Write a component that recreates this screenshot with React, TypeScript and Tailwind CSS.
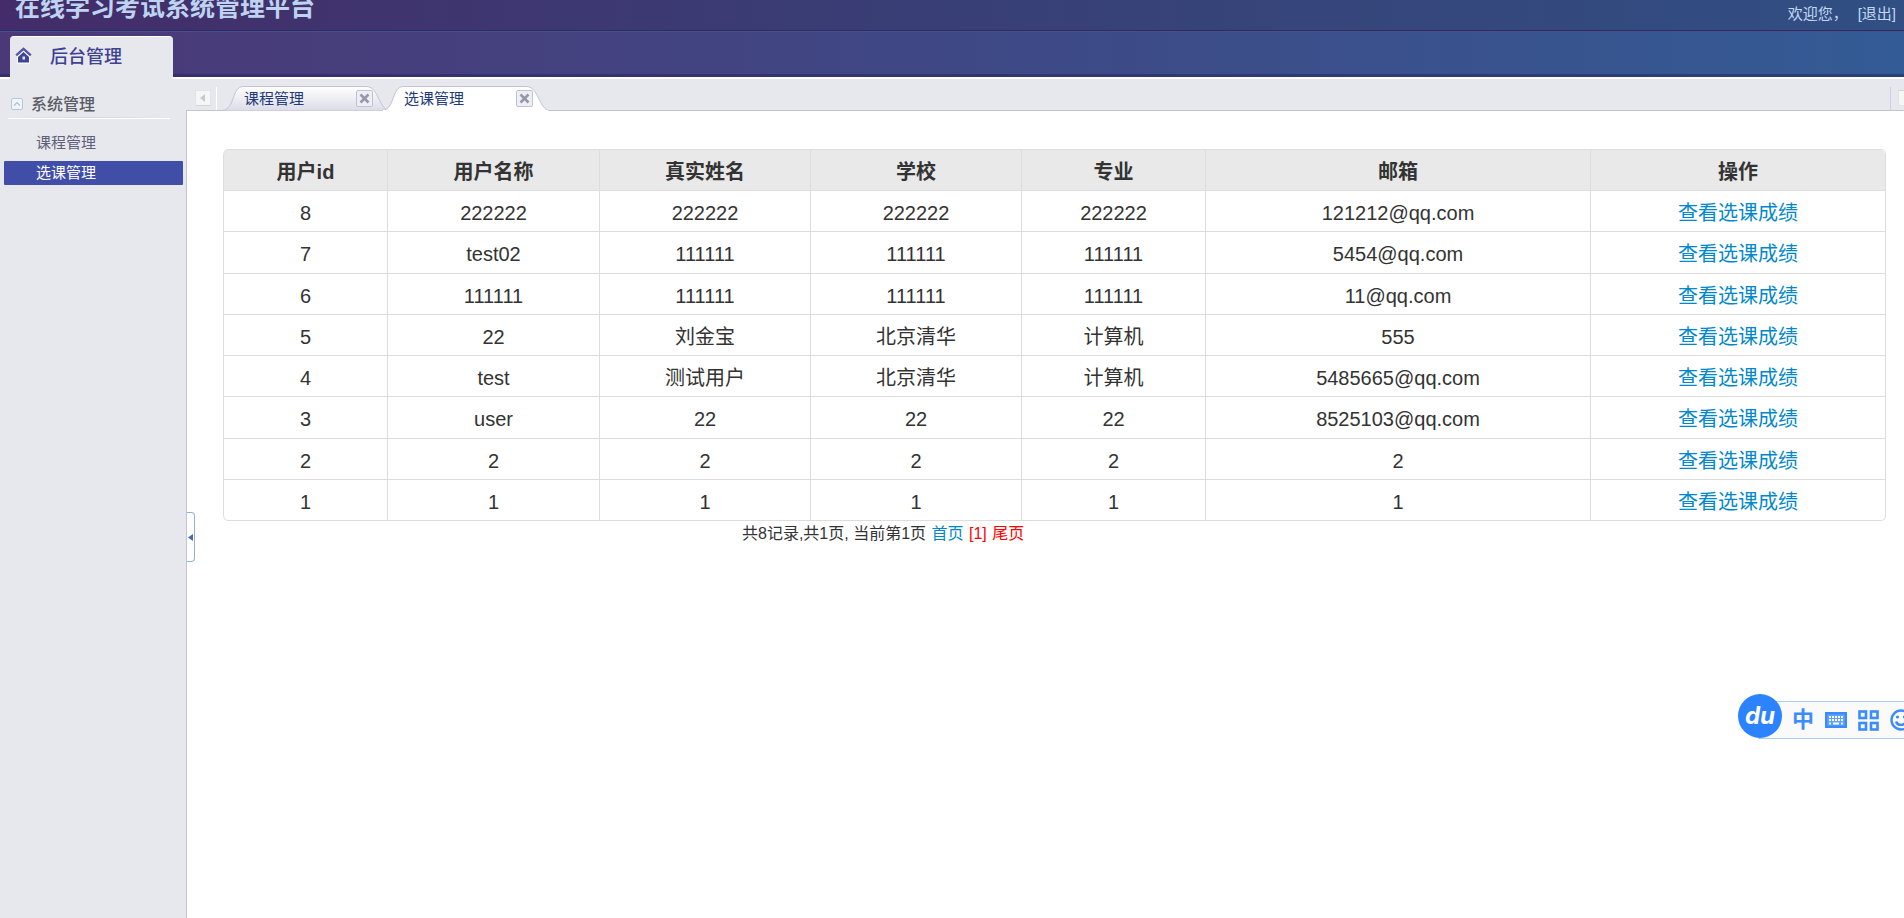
import React, { useState } from 'react';

interface User {
  id: number;
  name: string;
  realName: string;
  school: string;
  major: string;
  email: string;
}

const USERS: User[] = [
  { id: 8, name: '222222', realName: '222222', school: '222222', major: '222222', email: '121212@qq.com' },
  { id: 7, name: 'test02', realName: '111111', school: '111111', major: '111111', email: '5454@qq.com' },
  { id: 6, name: '111111', realName: '111111', school: '111111', major: '111111', email: '11@qq.com' },
  { id: 5, name: '22', realName: '刘金宝', school: '北京清华', major: '计算机', email: '555' },
  { id: 4, name: 'test', realName: '测试用户', school: '北京清华', major: '计算机', email: '5485665@qq.com' },
  { id: 3, name: 'user', realName: '22', school: '22', major: '22', email: '8525103@qq.com' },
  { id: 2, name: '2', realName: '2', school: '2', major: '2', email: '2' },
  { id: 1, name: '1', realName: '1', school: '1', major: '1', email: '1' },
];

const HEADERS = ['用户id', '用户名称', '真实姓名', '学校', '专业', '邮箱', '操作'];
const MENU = ['课程管理', '选课管理'];

const HomeIcon = () => (
  <svg width="17" height="17" viewBox="0 0 17 17" className="mb-1 shrink-0">
    <path d="M2 9 8.500 3.500 15 9v7.500H2z" fill="#fff" />
    <path d="M8.500 5 14 10V15.500H3V10z" fill="#3f4596" />
    <path d="M1.200 8.400 8.500 1.800 15.800 8.400" fill="none" stroke="#5557a3" strokeWidth="2.400" />
    <rect x="7.500" y="9.500" width="2.500" height="3" fill="#e7e8ee" />
  </svg>
);

const FoldIcon = () => (
  <svg width="12" height="12" viewBox="0 0 12 12" className="mb-[2px] shrink-0">
    <rect x=".5" y=".5" width="11" height="11" rx="1.500" fill="#f1f5f9" stroke="#b3c8da" />
    <path d="M3 7.500 6 4.500 9 7.500" fill="none" stroke="#a9c0d3" strokeWidth="1.200" />
  </svg>
);

const CloseIcon = () => (
  <svg width="17" height="17" viewBox="0 0 17 17">
    <rect x=".5" y=".5" width="16" height="16" rx="1.500" fill="#eeeef5" stroke="#bfc0d8" />
    <path d="M4.500 4.500 12.500 12.500M12.500 4.500 4.500 12.500" stroke="#9597ab" strokeWidth="2.600" />
  </svg>
);

const ArrowIcon = ({ flip = false }: { flip?: boolean }) => (
  <svg width="16" height="16" viewBox="0 0 16 16" className={flip ? 'rotate-180' : ''}>
    <rect x=".5" y=".5" width="15" height="15" fill="#f6f6f6" stroke="#e3e3e3" />
    <path d="M.5 15.500H15.500" stroke="#d4d4d4" />
    <path d="M10 4v8L5 8z" fill="#c9c9c9" />
  </svg>
);

const Tab = ({ label, active, onSelect }: { label: string; active: boolean; onSelect: () => void }) => (
  <div className="relative flex h-[25px] w-40 items-center">
    <svg width="167" height="25" viewBox="0 0 167 25" className="absolute top-0 left-0">
      <defs>
        <linearGradient id="tabFill" x1="0" y1="0" x2="0" y2="1">
          <stop offset="0" stopColor="#ffffff" />
          <stop offset="1" stopColor="#dcdce8" />
        </linearGradient>
      </defs>
      <path d="M0 24.500C7 24 9 18 12 10 14.500 3 17 .5 22 .5H144C150 .5 153 5 156 11 159 17 162 24 167 24.500" fill={active ? '#fff' : 'url(#tabFill)'} stroke="#c3c2d8" />
      {active && <path d="M1 24.500H166" stroke="#fff" />}
    </svg>
    <button onClick={onSelect} className="relative ml-[22px] h-6 w-28 text-left text-[15px] leading-6 text-[#21397a]">{label}</button>
    <button aria-label={`关闭${label}`} className="relative h-[17px] w-[17px]"><CloseIcon /></button>
  </div>
);

const KeyboardIcon = () => (
  <svg width="22" height="16" viewBox="0 0 22 16" fill="none" stroke="#3b8cff">
    <rect x="1.200" y="1.200" width="19.600" height="13.600" fill="#5fa2ff" strokeWidth="2.400" />
    <path d="M4 5H18M4 8H18" stroke="#fff" strokeWidth="2" strokeDasharray="2 1" />
    <path d="M4 11.500H6M8 11.500H14M16 11.500H18" stroke="#fff" strokeWidth="2" />
  </svg>
);

const GridIcon = () => (
  <svg width="21" height="21" viewBox="0 0 21 21" fill="none" stroke="#3b8cff" strokeWidth="2.600">
    <rect x="1.500" y="1.500" width="6.500" height="6.500" />
    <rect x="13" y="1.500" width="6.500" height="6.500" />
    <rect x="1.500" y="13" width="6.500" height="6.500" />
    <rect x="13" y="13" width="6.500" height="6.500" />
  </svg>
);

const SmileIcon = () => (
  <svg width="22" height="22" viewBox="0 0 22 22" fill="none" stroke="#3b8cff" strokeWidth="2.400">
    <circle cx="11" cy="11" r="9.500" />
    <path d="M6 12.500C7.500 17 14.500 17 16 12.500" />
    <circle cx="7.500" cy="8" r="1.600" fill="#3b8cff" stroke="none" />
    <circle cx="14.500" cy="8" r="1.600" fill="#3b8cff" stroke="none" />
  </svg>
);

const ImeBar = () => (
  <div className="absolute top-[694px] right-0 flex w-[166px] items-start overflow-hidden">
    <div className="relative z-10 flex h-11 w-11 shrink-0 items-center justify-center rounded-full bg-[#2b83ff] font-['Inter'] text-[24px] leading-none font-bold text-white italic">du</div>
    <div className="mt-[7px] -ml-6 flex h-[38px] shrink-0 items-center border-y border-[#a9ccff] bg-[#fafafb] pl-[34px]">
      <span className="w-[22px] text-[22px] leading-5 font-bold text-[#3b8cff]">中</span>
      <div className="ml-[11px]"><KeyboardIcon /></div>
      <div className="ml-[11px]"><GridIcon /></div>
      <div className="ml-[11px]"><SmileIcon /></div>
    </div>
  </div>
);

const UserTable = () => (
  <table className="h-[372px] w-full table-fixed border-separate border-spacing-0 rounded-[5px] border border-l-0 border-[#ddd] text-center text-[20px] leading-6 text-[#333]">
    <colgroup>
      <col className="w-[164px]" />
      <col className="w-[212px]" />
      <col className="w-[211px]" />
      <col className="w-[211px]" />
      <col className="w-[184px]" />
      <col className="w-[385px]" />
      <col className="w-[295px]" />
    </colgroup>
    <thead>
      <tr>
        {HEADERS.map(h => (
          <th key={h} className="h-10 border-l border-[#ddd] bg-[#e9e9e9] pt-1 font-bold first:rounded-tl-[5px] last:rounded-tr-[5px]">{h}</th>
        ))}
      </tr>
    </thead>
    <tbody>
      {USERS.map(u => (
        <tr key={u.id} className="[&>td]:border-t [&>td]:border-l [&>td]:border-[#ddd] [&>td]:pt-1 last:[&>td:first-child]:rounded-bl-[5px]">
          <td>{u.id}</td>
          <td>{u.name}</td>
          <td>{u.realName}</td>
          <td>{u.school}</td>
          <td>{u.major}</td>
          <td>{u.email}</td>
          <td><a href="#" className="text-[#0088cc]">查看选课成绩</a></td>
        </tr>
      ))}
    </tbody>
  </table>
);

const App: React.FC = () => {
  const [current, setCurrent] = useState('选课管理');

  return (
    <div className="relative flex h-screen flex-col overflow-hidden bg-white font-['Liberation_Sans','Noto_Sans_CJK_SC',sans-serif]">
      <header className="shrink-0">
        <div className="flex h-[31px] items-start justify-between border-b border-[#2f2b62] bg-linear-to-r from-[#432c69] via-[#383f76] to-[#304f83] pr-2 pl-[15px]">
          <h1 className="text-[25px] leading-[14px] font-bold text-[#bdd3f0]">在线学习考试系统管理平台</h1>
          <div className="flex gap-[10px] text-[15px] leading-7 text-[#c3d9f3]">
            <span>欢迎您，</span>
            <a href="#">[退出]</a>
          </div>
        </div>
        <div className="flex h-12 items-end border-t border-b-2 border-t-[#45508c] border-b-white bg-linear-to-r from-[#4b3877] via-[#3e4885] to-[#335b95] pl-[10px] shadow-[inset_0_-3px_0_rgba(35,35,95,0.5)]">
          <div className="-mb-[2px] flex h-[43px] w-[163px] items-center rounded-t-sm border-t border-white bg-[#e7e8ee] pb-[2px] pl-[5px] text-[18px] font-medium text-[#3d4190]">
            <HomeIcon />
            <span className="ml-[18px]">后台管理</span>
          </div>
        </div>
      </header>

      <div className="flex min-h-0 flex-1">
        <aside className="w-[186px] shrink-0 bg-[#e7e8ee] pt-[14px]">
          <div className="flex h-6 items-center gap-2 pl-[11px] text-[16px] font-medium text-[#5b5b66]">
            <FoldIcon />
            <span>系统管理</span>
          </div>
          <div className="mr-4 ml-2 h-[2px] border-b border-white bg-linear-to-r from-transparent via-[#cdd5e4] to-transparent" />
          <nav className="mt-3 flex flex-col gap-[6px] pr-[3px] pl-1">
            {MENU.map(m => (
              <a key={m} href="#" onClick={() => setCurrent(m)} className={`flex h-6 items-center rounded-[1px] pl-8 text-[15px] ${m === current ? 'bg-[#414ea8] text-white' : 'text-[#5e6078]'}`}>{m}</a>
            ))}
          </nav>
        </aside>

        <main className="relative flex min-w-0 flex-1 flex-col">
          <div className="flex h-8 shrink-0 items-end border-b border-[#c3c2d8] bg-[#e7e8ee]">
            <button aria-label="向左" className="mb-1 ml-[9px] h-4 w-4"><ArrowIcon /></button>
            <div className="ml-[5px] h-[23px] w-px bg-white" />
            <div className="-mb-px ml-[5px] flex">
              {MENU.map(m => <Tab key={m} label={m} active={m === current} onSelect={() => setCurrent(m)} />)}
            </div>
            <div className="ml-auto h-[23px] w-px bg-[#cfcfdf]" />
            <button aria-label="向右" className="mb-1 ml-[7px] h-4 w-[6px] overflow-hidden"><ArrowIcon flip /></button>
          </div>

          <div className="flex-1 border-l border-[#c3c2d8] pt-[38px] pr-[18px] pl-9">
            <UserTable />
            <div className="pl-[519px] text-[16px] leading-[26px] text-[#333]">
              共8记录,共1页, 当前第1页 <a href="#" className="mx-px text-[#0088cc]">首页</a> <span className="text-[#ff0000]">[1]</span> <a href="#" className="mx-px text-[#ff0000]">尾页</a>
            </div>
          </div>

          <button aria-label="收起菜单" className="absolute top-[433px] left-px flex h-[50px] w-2 items-center justify-center rounded-r-sm border border-l-0 border-[#8fb2e0] bg-white">
            <svg width="5" height="7" viewBox="0 0 5 7"><path d="M5 0v7L0 3.500z" fill="#446ca8" /></svg>
          </button>
        </main>
      </div>

      <ImeBar />
    </div>
  );
};

export default App;
